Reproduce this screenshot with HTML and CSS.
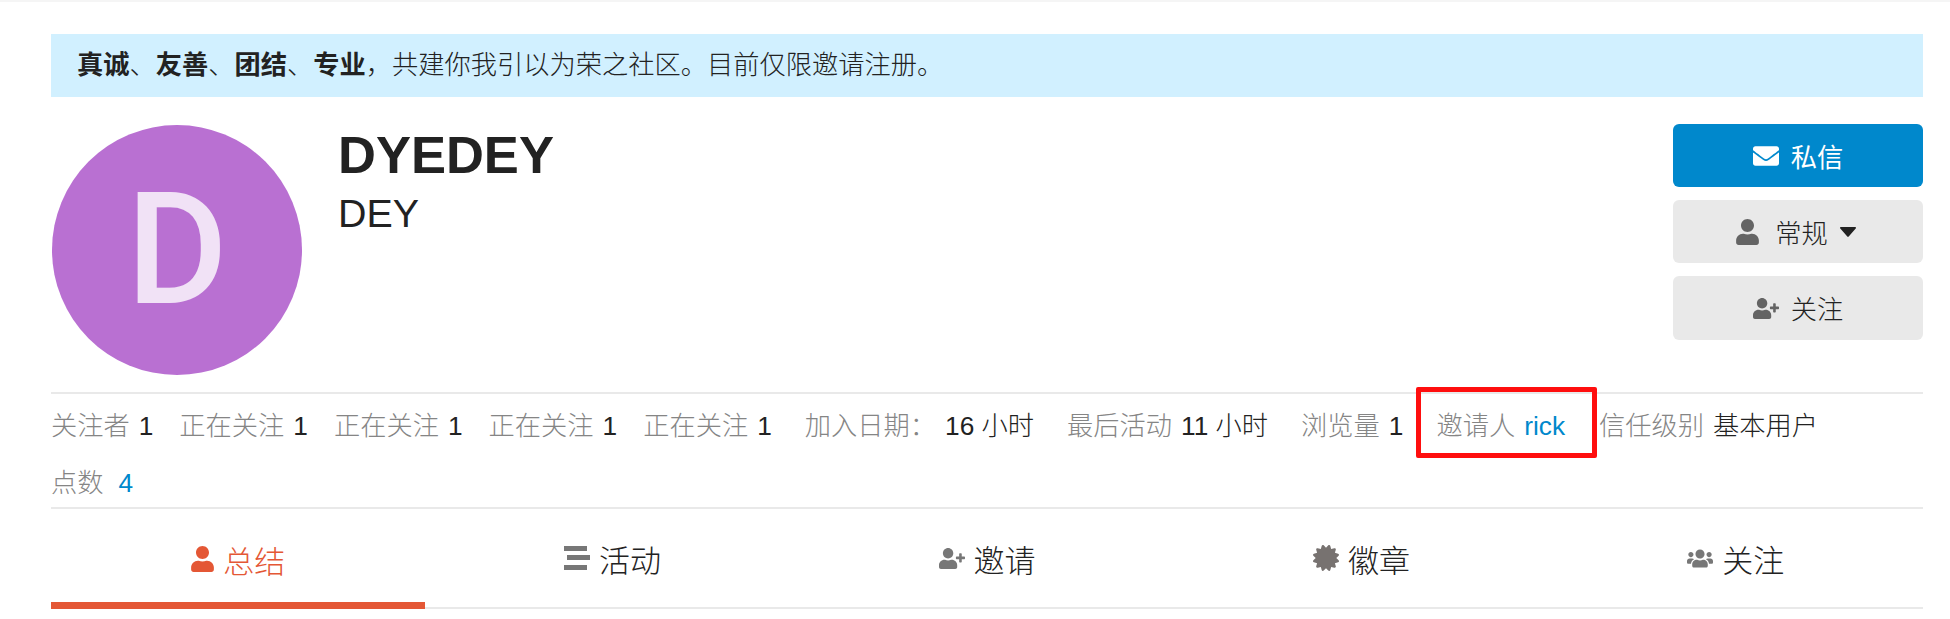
FILE: index.html
```html
<!DOCTYPE html>
<html lang="zh-CN">
<head>
<meta charset="utf-8">
<title>DYEDEY</title>
<link rel="stylesheet" href="styles.css">
</head>
<body>
<div class="topbar"></div>
<main class="page">
  <div class="banner"><strong>真诚</strong>、<strong>友善</strong>、<strong>团结</strong>、<strong>专业</strong>，共建你我引以为荣之社区。目前仅限邀请注册。</div>
  <section class="profile">
    <div class="avatar">D</div>
    <div class="names">
      <h1 class="username">DYEDEY</h1>
      <h2 class="fullname">DEY</h2>
    </div>
    <div class="actions">
      <button class="btn btn-primary">
        <svg class="icon icon-mail" viewBox="0 0 512 512"><path d="M502.3 190.8c3.9-3.1 9.7-.2 9.7 4.7V400c0 26.5-21.5 48-48 48H48c-26.5 0-48-21.5-48-48V195.6c0-5 5.7-7.8 9.7-4.7 22.4 17.4 52.1 39.5 154.1 113.6 21.1 15.4 56.7 47.8 92.2 47.6 35.7.3 72-32.8 92.3-47.6 102-74.1 131.6-96.3 154-113.7zM256 320c23.2.4 56.6-29.2 73.4-41.4 132.7-96.3 142.8-104.7 173.4-128.7 5.8-4.5 9.2-11.5 9.2-18.9v-19c0-26.5-21.5-48-48-48H48C21.5 64 0 85.5 0 112v19c0 7.4 3.4 14.3 9.2 18.9 30.6 23.9 40.7 32.4 173.4 128.7 16.8 12.2 50.2 41.8 73.4 41.4z"/></svg>
        <span>私信</span>
      </button>
      <button class="btn btn-level">
        <svg class="icon icon-user" viewBox="0 0 448 512"><path d="M224 256c70.7 0 128-57.3 128-128S294.7 0 224 0 96 57.3 96 128s57.3 128 128 128zm89.6 32h-16.7c-22.2 10.2-46.9 16-72.9 16s-50.6-5.8-72.9-16h-16.7C60.2 288 0 348.2 0 422.4V464c0 26.5 21.5 48 48 48h352c26.5 0 48-21.5 48-48v-41.6c0-74.2-60.2-134.4-134.4-134.4z"/></svg>
        <span>常规</span>
        <svg class="caret" viewBox="0 0 16 10"><path d="M1 0h14c.9 0 1.300 1 .7 1.600L8.700 9.600a1 1 0 0 1-1.400 0L.3 1.600C-.3 1 .1 0 1 0z"/></svg>
      </button>
      <button class="btn">
        <svg class="icon icon-wide" viewBox="0 0 640 512"><path d="M624 208h-64v-64c0-8.800-7.200-16-16-16h-32c-8.800 0-16 7.200-16 16v64h-64c-8.800 0-16 7.200-16 16v32c0 8.800 7.200 16 16 16h64v64c0 8.800 7.200 16 16 16h32c8.800 0 16-7.200 16-16v-64h64c8.800 0 16-7.200 16-16v-32c0-8.800-7.200-16-16-16zm-400 48c70.700 0 128-57.300 128-128S294.700 0 224 0 96 57.300 96 128s57.300 128 128 128zm89.600 32h-16.700c-22.200 10.200-46.900 16-72.900 16s-50.600-5.800-72.900-16h-16.700C60.200 288 0 348.200 0 422.400V464c0 26.500 21.500 48 48 48h352c26.500 0 48-21.500 48-48v-41.600c0-74.200-60.200-134.400-134.400-134.400z"/></svg>
        <span>关注</span>
      </button>
    </div>
  </section>
  <dl class="stats">
    <div class="stat stat-tight"><dt>关注者</dt><dd>1</dd></div>
    <div class="stat stat-tight"><dt>正在关注</dt><dd>1</dd></div>
    <div class="stat stat-tight"><dt>正在关注</dt><dd>1</dd></div>
    <div class="stat stat-tight"><dt>正在关注</dt><dd>1</dd></div>
    <div class="stat"><dt>正在关注</dt><dd>1</dd></div>
    <div class="stat"><dt>加入日期：</dt><dd>16 小时</dd></div>
    <div class="stat"><dt>最后活动</dt><dd>11 小时</dd></div>
    <div class="stat"><dt>浏览量</dt><dd>1</dd></div>
    <div class="stat stat-invited"><dt>邀请人</dt><dd class="link">rick</dd></div>
    <div class="stat"><dt>信任级别</dt><dd>基本用户</dd></div>
    <div class="stat stat-points"><dt>点数</dt><dd class="link">4</dd></div>
    <div class="highlight"></div>
  </dl>
  <nav class="tabs">
    <a class="tab active">
      <svg class="tab-icon tab-user" viewBox="0 0 448 512"><path d="M224 256c70.700 0 128-57.300 128-128S294.700 0 224 0 96 57.300 96 128s57.300 128 128 128zm89.600 32h-16.700c-22.200 10.200-46.900 16-72.900 16s-50.600-5.800-72.900-16h-16.700C60.200 288 0 348.200 0 422.400V464c0 26.500 21.500 48 48 48h352c26.500 0 48-21.500 48-48v-41.600c0-74.200-60.200-134.400-134.400-134.400z"/></svg>
      <span>总结</span>
    </a>
    <a class="tab">
      <svg class="tab-icon tab-stream" viewBox="0 0 26 24"><rect x="0" y="0" width="23" height="5"/><rect x="3" y="9" width="23" height="5"/><rect x="0" y="19" width="23" height="5"/></svg>
      <span>活动</span>
    </a>
    <a class="tab">
      <svg class="tab-icon tab-wide" viewBox="0 0 640 512"><path d="M624 208h-64v-64c0-8.800-7.200-16-16-16h-32c-8.800 0-16 7.200-16 16v64h-64c-8.800 0-16 7.200-16 16v32c0 8.800 7.200 16 16 16h64v64c0 8.800 7.200 16 16 16h32c8.800 0 16-7.200 16-16v-64h64c8.800 0 16-7.200 16-16v-32c0-8.800-7.200-16-16-16zm-400 48c70.700 0 128-57.300 128-128S294.700 0 224 0 96 57.300 96 128s57.300 128 128 128zm89.600 32h-16.700c-22.200 10.200-46.900 16-72.900 16s-50.600-5.800-72.900-16h-16.700C60.200 288 0 348.200 0 422.400V464c0 26.500 21.500 48 48 48h352c26.500 0 48-21.500 48-48v-41.600c0-74.200-60.200-134.400-134.400-134.400z"/></svg>
      <span>邀请</span>
    </a>
    <a class="tab">
      <svg class="tab-icon tab-badge" viewBox="0 0 512 512"><path d="M458.622 255.920l45.985-45.005c13.708-12.977 7.316-36.039-10.664-40.339l-62.650-15.990 17.661-62.015c4.991-17.838-11.829-34.663-29.661-29.671l-61.994 17.667-15.984-62.671C337.085.197 313.765-6.276 300.990 7.228L256 53.570 211.011 7.229c-12.630-13.351-36.047-7.234-40.325 10.668l-15.984 62.671-61.995-17.667C74.870 57.907 58.056 74.738 63.046 92.572l17.661 62.015-62.650 15.990C.069 174.878-6.310 197.944 7.392 210.915l45.985 45.005-45.985 45.004c-13.708 12.977-7.316 36.039 10.664 40.339l62.650 15.990-17.661 62.015c-4.991 17.838 11.829 34.663 29.661 29.671l61.994-17.667 15.984 62.671c4.439 18.575 27.696 24.018 40.325 10.668L256 458.610l44.989 46.001c12.500 13.488 35.987 7.486 40.325-10.668l15.984-62.671 61.994 17.667c17.836 4.994 34.651-11.837 29.661-29.671l-17.661-62.015 62.650-15.990c17.987-4.302 24.366-27.367 10.664-40.339l-45.984-45.004z"/></svg>
      <span>徽章</span>
    </a>
    <a class="tab">
      <svg class="tab-icon tab-wide" viewBox="0 0 640 512"><path d="M96 224c35.300 0 64-28.700 64-64s-28.700-64-64-64-64 28.700-64 64 28.700 64 64 64zm448 0c35.300 0 64-28.700 64-64s-28.700-64-64-64-64 28.700-64 64 28.700 64 64 64zm32 32h-64c-17.600 0-33.500 7.100-45.100 18.600 40.300 22.100 68.900 62 75.100 109.400h66c17.700 0 32-14.300 32-32v-32c0-35.300-28.700-64-64-64zm-256 0c61.900 0 112-50.100 112-112S381.900 32 320 32 208 82.100 208 144s50.100 112 112 112zm76.800 32h-8.300c-20.800 10-43.900 16-68.500 16s-47.600-6-68.500-16h-8.300C179.600 288 128 339.600 128 403.200V432c0 26.500 21.500 48 48 48h288c26.500 0 48-21.500 48-48v-28.800c0-63.600-51.600-115.200-115.200-115.200zm-223.700-13.400C161.500 263.100 145.600 256 128 256H64c-35.300 0-64 28.700-64 64v32c0 17.700 14.300 32 32 32h65.900c6.300-47.400 34.900-87.300 75.200-109.400z"/></svg>
      <span>关注</span>
    </a>
  </nav>
</main>
</body>
</html>
```

FILE: styles.css
```css
* { box-sizing: border-box; }
html, body { margin: 0; background: #fff; }
body {
  font-family: "Liberation Sans", "Noto Sans CJK SC", sans-serif;
  font-size: 26.25px;
  font-weight: 300;
  color: #222;
}
strong { font-weight: 700; }
.topbar { height: 2px; background: #f5f5f5; }
.page { padding: 32px 27px 0 51px; }

.banner {
  height: 63px;
  padding-left: 26px;
  line-height: 63px;
  background: #d1f0ff;
}

.profile { display: flex; margin-top: 28px; height: 267px; }
.avatar {
  width: 250px;
  height: 250px;
  margin-left: 1px;
  border-radius: 50%;
  background: #b970d2;
  color: rgba(255, 255, 255, .8);
  font: 500 155px/250px Roboto, sans-serif;
  text-align: center;
}
.names { flex: 1; margin-left: 36px; }
.username { margin: 0; font-size: 52.5px; font-weight: 700; line-height: 60px; }
.fullname { margin: 0; font-size: 39.4px; font-weight: 400; line-height: 56px; }

.actions { width: 250px; margin-top: -1px; display: flex; flex-direction: column; gap: 13px; }
.btn {
  height: 63px;
  display: flex;
  align-items: center;
  justify-content: center;
  gap: 12px;
  border: 0;
  border-radius: 6px;
  background: #e9e9e9;
  color: #222;
  font: inherit;
  padding: 0;
}
.btn:last-child { height: 64px; }
.btn-primary { background: #0088cc; color: #fff; font-weight: 400; }
.btn-level { gap: 16px; padding-right: 4px; }
.btn-level .caret { margin-left: -4px; }
.icon { fill: #646464; }
.btn-primary .icon { fill: #fff; }
.icon-mail { width: 26px; height: 26px; }
.icon-user { width: 23px; height: 26px; }
.icon-wide { width: 26px; height: 21px; }
.caret { width: 16px; height: 10px; fill: #222; }

.stats {
  position: relative;
  display: flex;
  flex-wrap: wrap;
  align-content: flex-start;
  margin: 0;
  padding-top: 4px;
  height: 117px;
  border-top: 2px solid #e9e9e9;
  border-bottom: 2px solid #e9e9e9;
}
.stat { display: flex; gap: 9px; margin-right: 33px; line-height: 57px; height: 57px; }
.stat-tight { margin-right: 26px; }
.stat-invited { margin-right: 34px; }
.stat-points { gap: 15px; }
dt { color: #858585; }
dd { margin: 0; }
.link { color: #0088cc; }
.highlight {
  position: absolute;
  left: 1365px;
  top: -7px;
  width: 181px;
  height: 71px;
  border: 5px solid #ff0e0e;
  border-radius: 2px;
}

.tabs { display: flex; height: 100px; border-bottom: 2px solid #e9e9e9; }
.tab {
  flex: 1;
  display: flex;
  align-items: center;
  justify-content: center;
  gap: 9px;
  font-size: 31px;
  color: #222;
}
.tab-icon { fill: #777; }
.tab.active { color: #e45735; border-bottom: 7px solid #e45735; height: 100px; padding-top: 7px; }
.tab.active .tab-icon { fill: #e45735; }
.tab-user { width: 23px; height: 26px; }
.tab-stream { width: 26px; height: 24px; }
.tab-wide { width: 26px; height: 21px; }
.tab-badge { width: 26px; height: 26px; fill: #777270; }
```
